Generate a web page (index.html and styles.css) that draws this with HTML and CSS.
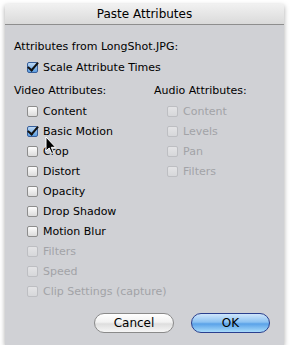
FILE: index.html
```html
<!DOCTYPE html>
<html lang="en">
<head>
  <meta charset="UTF-8" />
  <title>Paste Attributes</title>
  <link rel="stylesheet" href="styles.css">
</head>
<body>
  <div class="window">
    <div class="titlebar">Paste Attributes</div>

    <div class="content">
      <div class="line">Attributes from LongShot.JPG:</div>
      <label class="check indent"><span class="box checked"></span>Scale Attribute Times</label>

      <div class="columns">
        <div class="col video">
          <div class="line">Video Attributes:</div>
          <label class="check indent"><span class="box"></span>Content</label>
          <label class="check indent"><span class="box checked"></span>Basic Motion</label>
          <label class="check indent"><span class="box"></span>Crop</label>
          <label class="check indent"><span class="box"></span>Distort</label>
          <label class="check indent"><span class="box"></span>Opacity</label>
          <label class="check indent"><span class="box"></span>Drop Shadow</label>
          <label class="check indent"><span class="box"></span>Motion Blur</label>
          <label class="check indent disabled"><span class="box"></span>Filters</label>
          <label class="check indent disabled"><span class="box"></span>Speed</label>
          <label class="check indent disabled"><span class="box"></span>Clip Settings (capture)</label>
        </div>
        <div class="col audio">
          <div class="line">Audio Attributes:</div>
          <label class="check indent disabled"><span class="box"></span>Content</label>
          <label class="check indent disabled"><span class="box"></span>Levels</label>
          <label class="check indent disabled"><span class="box"></span>Pan</label>
          <label class="check indent disabled"><span class="box"></span>Filters</label>
        </div>
      </div>

      <div class="buttons">
        <button class="btn">Cancel</button>
        <button class="btn primary">OK</button>
      </div>
    </div>

    <!-- mouse pointer -->
    <svg class="pointer" width="12" height="19" viewBox="0 0 12 19">
      <path d="M1 1 L1 15 L4.2 12 L6.6 17.5 L8.6 16.6 L6.3 11.3 L10.6 11.3 Z" fill="#000" stroke="#fff" stroke-width="1" stroke-linejoin="round"/>
    </svg>
  </div>
</body>
</html>
```

FILE: styles.css
```css
body {
  margin: 0;
  background-color: #fff;
  font-family: "DejaVu Sans", sans-serif;
  font-size: 11px;
  color: #000;
}

.window {
  position: relative;
  width: 279px;
  height: 341px;
  margin: 4px 0 0 5px;
  background-color: #d0d1d5;
  box-shadow: 0 2px 5px rgba(0, 0, 0, 0.35);
  box-sizing: border-box;
}

.titlebar {
  height: 21px;
  line-height: 21px;
  text-align: center;
  font-size: 12px;
  background: linear-gradient(#f1f1f1, #dadada);
  border-bottom: 1px solid #8e8e8e;
  box-sizing: border-box;
}

.content {
  padding: 12px 0 0 9px;
}

.line {
  height: 20px;
  line-height: 20px;
  white-space: nowrap;
}

.check {
  display: flex;
  align-items: center;
  height: 20px;
  white-space: nowrap;
}

.indent {
  padding-left: 13px;
}

.disabled {
  color: #a2a3a7;
}

.box {
  flex: none;
  width: 11px;
  height: 11px;
  margin-right: 5px;
  border: 1px solid #8d8d8d;
  border-radius: 2px;
  background: linear-gradient(#fdfdfd, #dcdcdc);
  box-sizing: border-box;
  position: relative;
}

.disabled .box {
  border-color: #bdbec2;
  background: linear-gradient(#e4e4e6, #d6d7da);
}

.box.checked {
  border-color: #375f9b;
  background: linear-gradient(#bcd8f4, #5c9ee0);
}

.box.checked::after {
  content: "";
  position: absolute;
  left: 2px;
  top: -3px;
  width: 4px;
  height: 9px;
  border-right: 2px solid #111;
  border-bottom: 2px solid #111;
  transform: rotate(40deg);
}

.columns {
  display: flex;
  margin-top: 4px;
}

.col.video {
  width: 140px;
}

.buttons {
  display: flex;
  justify-content: flex-end;
  gap: 17px;
  margin: 12px 14px 0 0;
}

.btn {
  width: 80px;
  height: 20px;
  border: 1px solid #8a8a8a;
  border-radius: 10px;
  background: linear-gradient(#ffffff 0%, #f2f2f2 45%, #dedede 55%, #f6f6f6 100%);
  font-family: "DejaVu Sans", sans-serif;
  font-size: 12px;
  color: #000;
  padding: 0;
}

.btn.primary {
  width: 79px;
  border-color: #2a3f8e;
  background: linear-gradient(#cfe6fb 0%, #8cc2f2 45%, #5aa2e8 55%, #a9dcfb 100%);
}

.pointer {
  position: absolute;
  left: 40px;
  top: 132px;
}
```
